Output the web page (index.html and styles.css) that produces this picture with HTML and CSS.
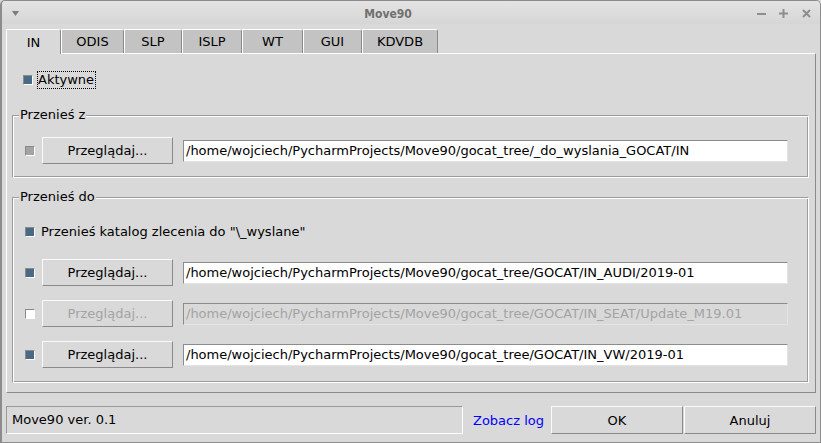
FILE: index.html
```html
<!DOCTYPE html>
<html lang="pl">
<head>
<meta charset="utf-8">
<title>Move90</title>
<link rel="stylesheet" href="styles.css">
</head>
<body>
<div class="window">
  <div class="titlebar">
    <svg class="menu-arrow" width="7" height="5" viewBox="0 0 7 5"><path d="M0 0H7L3.5 5Z" fill="#7d7d7d"/></svg>
    <div class="title">Move90</div>
    <div class="controls">
      <svg width="9" height="9" viewBox="0 0 9 9"><path d="M0 5H9" stroke="#8e8e8e" stroke-width="2"/></svg>
      <svg width="9" height="9" viewBox="0 0 9 9"><path d="M0 4.5H9M4.5 0V9" stroke="#8e8e8e" stroke-width="2"/></svg>
      <svg width="9" height="9" viewBox="0 0 9 9"><path d="M1 1L8 8M8 1L1 8" stroke="#8e8e8e" stroke-width="2"/></svg>
    </div>
  </div>
  <div class="body">
    <div class="tabs">
      <div class="tab active t-in">IN</div>
      <div class="tab t-odis">ODIS</div>
      <div class="tab t-slp">SLP</div>
      <div class="tab t-islp">ISLP</div>
      <div class="tab t-wt">WT</div>
      <div class="tab t-gui">GUI</div>
      <div class="tab t-kdvdb">KDVDB</div>
    </div>
    <div class="pane">
      <div class="active-row">
        <span class="box on"></span>
        <span class="focus-label">Aktywne</span>
      </div>
      <div class="group group-from">
        <span class="group-label">Przenieś z</span>
        <div class="path-row">
          <span class="box alt"></span>
          <div class="button browse">Przeglądaj...</div>
          <div class="entry">/home/wojciech/PycharmProjects/Move90/gocat_tree/_do_wyslania_GOCAT/IN</div>
        </div>
      </div>
      <div class="group group-to">
        <span class="group-label">Przenieś do</span>
        <div class="check-row">
          <span class="box on"></span>
          <span class="check-text">Przenieś katalog zlecenia do "\_wyslane"</span>
        </div>
        <div class="path-row first">
          <span class="box on"></span>
          <div class="button browse">Przeglądaj...</div>
          <div class="entry">/home/wojciech/PycharmProjects/Move90/gocat_tree/GOCAT/IN_AUDI/2019-01</div>
        </div>
        <div class="path-row">
          <span class="box"></span>
          <div class="button browse disabled">Przeglądaj...</div>
          <div class="entry disabled">/home/wojciech/PycharmProjects/Move90/gocat_tree/GOCAT/IN_SEAT/Update_M19.01</div>
        </div>
        <div class="path-row">
          <span class="box on"></span>
          <div class="button browse">Przeglądaj...</div>
          <div class="entry">/home/wojciech/PycharmProjects/Move90/gocat_tree/GOCAT/IN_VW/2019-01</div>
        </div>
      </div>
    </div>
    <div class="statusbar">
      <div class="status">Move90 ver. 0.1</div>
      <span class="log-link">Zobacz log</span>
      <div class="button action ok">OK</div>
      <div class="button action">Anuluj</div>
    </div>
  </div>
</div>
</body>
</html>
```

FILE: styles.css
```css
* { box-sizing: border-box; }
html, body { margin: 0; padding: 0; }
body {
  width: 821px;
  height: 443px;
  overflow: hidden;
  background: #d9d9d9;
  font-family: "DejaVu Sans", sans-serif;
  font-size: 13px;
  color: #000;
}
.window {
  width: 821px;
  height: 443px;
  border: 1px solid #8c8c8c;
  border-left-width: 2px;
  border-radius: 5px 5px 0 0;
  background: #d9d9d9;
  display: flex;
  flex-direction: column;
  overflow: hidden;
}
.titlebar {
  height: 23px;
  flex: none;
  display: flex;
  align-items: center;
  padding: 0 9px 0 10px;
  background: linear-gradient(#e3e3e3, #d6d6d6);
}
.menu-arrow { flex: none; margin-top: 2px; }
.title {
  flex: 1;
  text-align: center;
  font-family: "DejaVu Sans Condensed", "DejaVu Sans", sans-serif;
  font-stretch: condensed;
  font-weight: bold;
  font-size: 12px;
  color: #707070;
  padding-top: 2px;
}
.controls {
  display: flex;
  gap: 13px;
  align-items: center;
  margin-top: 2px;
}
.controls svg:last-child { margin-left: 1px; }
.body {
  flex: 1;
  padding: 5px 4px 8px 4px;
  display: flex;
  flex-direction: column;
}
.tabs {
  display: flex;
  height: 24px;
  align-items: flex-start;
}
.tab {
  height: 24px;
  border-top: 1px solid #fff;
  border-left: 1px solid #fff;
  border-right: 1px solid #8a8a8a;
  border-top-right-radius: 3px;
  background: #c3c3c3;
  display: flex;
  align-items: center;
  justify-content: center;
  flex: none;
}
.tab.active {
  background: #d9d9d9;
  height: 25px;
  position: relative;
}
.t-in { width: 55px; }
.t-odis { width: 63px; }
.t-slp { width: 58px; }
.t-islp { width: 60px; }
.t-wt { width: 61px; }
.t-gui { width: 59px; }
.t-kdvdb { width: 76px; }
.pane {
  border: 1px solid;
  border-color: #fff #8a8a8a #8a8a8a #fff;
  padding: 0 6px 9px 5px;
}
.active-row {
  margin-top: 17px;
  height: 18px;
  display: flex;
  align-items: center;
  padding-left: 11px;
}
.focus-label {
  margin-left: 4px;
  height: 18px;
  line-height: 16px;
  border: 1px dotted #000;
  padding: 0 1px 0 0;
}
.box {
  flex: none;
  width: 10px;
  height: 10px;
  border: 1px solid;
  border-color: #8a8a8a #fff #fff #8a8a8a;
  background: #fff;
}
.box.on { background: #4a6984; }
.box.alt { background: #a3a3a3; }
.group {
  position: relative;
  border: 1px solid;
  border-color: #9c9c9c #fff #fff #9c9c9c;
  box-shadow: inset 1px 1px 0 #fff, inset -1px -1px 0 #9c9c9c;
  padding-left: 12px;
}
.group-from {
  margin-top: 26px;
  padding-top: 21px;
  padding-bottom: 13px;
}
.group-to {
  margin-top: 19px;
  padding-top: 23px;
  padding-bottom: 14px;
}
.group-label {
  position: absolute;
  top: -9px;
  left: 6px;
  padding: 0 1px;
  line-height: 15px;
  background: #d9d9d9;
}
.path-row {
  display: flex;
  align-items: center;
  height: 27px;
}
.path-row + .path-row { margin-top: 14px; }
.path-row.first { margin-top: 17px; }
.path-row .box { margin-right: 7px; }
.check-row {
  display: flex;
  align-items: center;
  height: 21px;
}
.check-text { margin-left: 6px; }
.button {
  flex: none;
  display: flex;
  align-items: center;
  justify-content: center;
  border: 1px solid;
  border-color: #fafafa #8a8a8a #8a8a8a #fafafa;
  background: #d9d9d9;
}
.button.browse { width: 131px; height: 27px; }
.button.disabled { color: #a3a3a3; }
.entry {
  flex: none;
  margin-left: 10px;
  width: 605px;
  height: 22px;
  line-height: 20px;
  padding-left: 2px;
  border: 1px solid;
  border-color: #8c8c8c #e4e4e4 #e4e4e4 #8c8c8c;
  background: #fff;
  white-space: nowrap;
  overflow: hidden;
}
.entry.disabled {
  background: #d9d9d9;
  color: #a3a3a3;
}
.statusbar {
  margin-top: 13px;
  height: 28px;
  display: flex;
  align-items: center;
}
.status {
  width: 457px;
  height: 28px;
  line-height: 26px;
  padding-left: 5px;
  border: 1px solid;
  border-color: #9a9a9a #fff #fff #9a9a9a;
}
.log-link {
  margin-left: 10px;
  color: #0000ff;
}
.button.action { width: 132px; height: 28px; }
.button.ok { margin-left: auto; margin-right: 1px; }
```
